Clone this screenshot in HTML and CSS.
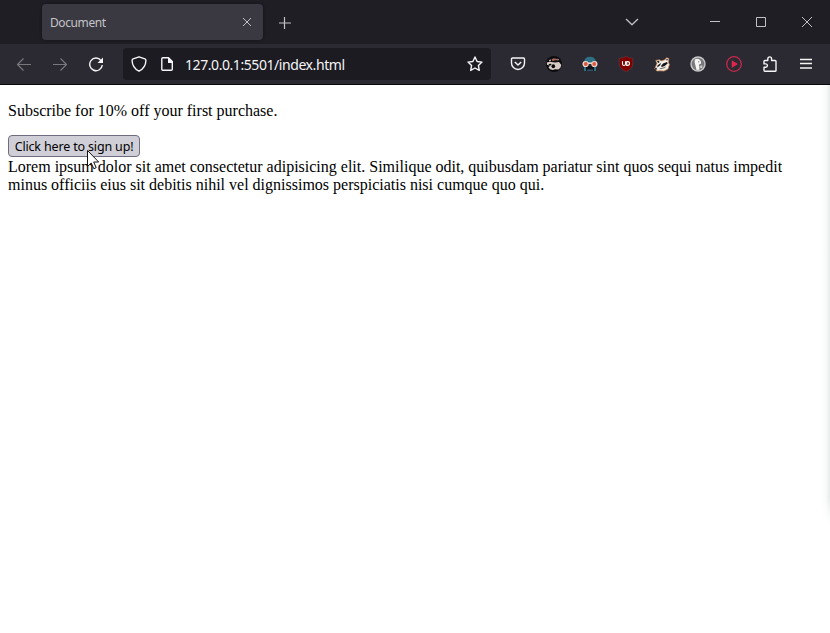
FILE: index.html
```html
<!DOCTYPE html>
<html lang="en">
<head>
<meta charset="utf-8">
<title>Document</title>
<link rel="stylesheet" href="styles.css">
</head>
<body>
<header class="tabs">
  <div class="tab"><span class="tab-title">Document</span>
    <svg class="tab-close" width="10" height="10" viewBox="0 0 10 10"><path d="M1 1l8 8M9 1L1 9"/></svg>
  </div>
  <svg class="new-tab" width="12" height="13" viewBox="0 0 12 13"><path d="M5.500 1v12M0 7h12"/></svg>
  <svg class="tab-list" width="14" height="8" viewBox="0 0 14 8"><path d="M1 1l6 5.7L13 1"/></svg>
  <div class="window-controls">
    <svg width="46" height="44" viewBox="0 0 46 44"><path d="M18 21.500h10"/></svg>
    <svg width="46" height="44" viewBox="0 0 46 44"><path d="M18.500 17.500h9v9h-9z"/></svg>
    <svg width="46" height="44" viewBox="0 0 46 44"><path d="M18 17l10 10M28 17L18 27"/></svg>
  </div>
</header>
<nav class="toolbar">
  <div class="navigation">
    <svg class="disabled" viewBox="0 0 16 16"><path d="M15 8.500H1.500M7.500 2.500l-6 6 6 6"/></svg>
    <svg class="disabled" viewBox="0 0 16 16"><path d="M1 8.500h13.500M8.500 2.500l6 6-6 6"/></svg>
    <svg viewBox="0 0 16 16"><path class="thick" d="M13 4.500A6.300 6.300 0 1 0 14.300 9"/><path class="solid" d="M15 1.500V7H9.500z"/></svg>
  </div>
  <div class="address">
    <svg viewBox="0 0 16 16"><path class="thick" d="M8 .8l5.900 2.100q1 .4 1 1.500C14.800 9 13 12.500 8 15.200 3 12.500 1.200 9 1.100 4.400q0-1.100 1-1.500z"/></svg>
    <svg class="page-icon" viewBox="0 0 16 16"><path class="thick" d="M9.500 1.800H3.800q-1 0-1 1v10.500q0 1 1 1h8.500q1 0 1-1V5.500z"/><path class="solid" d="M9 1l5 5v1H9z"/></svg>
    <span class="url">127.0.0.1:5501/index.html</span>
    <svg class="star" viewBox="0 0 16 16"><path class="thick" d="M8 1l2.100 4.500 4.900.6-3.600 3.400.9 4.900L8 12l-4.300 2.400.9-4.900L1 6.100l4.900-.6z"/></svg>
  </div>
  <div class="extensions">
    <svg viewBox="0 0 16 16"><path class="thick" d="M2.500 2h11q1 0 1 1v4a6.500 6.500 0 0 1-13 0V3q0-1 1-1zM4.800 6L8 9l3.200-3"/></svg>
    <svg viewBox="0 0 16 16"><circle cx="8" cy="8" r="8" fill="#0c0b0e"/><path fill="#d8cbc3" d="M.8 6.500L4 5.800l5 .7 4-.5 2.300 3-.8 2.500-2 2-3.500-.3-2 .8-3-.8-1.500-2 1.500-1.500-3-1z"/><path fill="#a9645b" d="M5.500 3.500l2-1.200 4 .8 1 1.400-3-.3-3 .8z"/><path fill="#d8cbc3" d="M3 4.300l1.500-1 .5 1.500-1.500.7zM11.500 2.500l1.500 1-1 .8z"/><ellipse cx="7.300" cy="10.300" rx="1.800" ry="2" fill="#080808"/><path fill="#0c0b0e" d="M3 8l2-.3.5 1L4 9.700 2.500 9z"/></svg>
    <svg viewBox="0 0 16 16"><path fill="#2e7185" d="M1.800 7.500V6Q3 .7 8 .7T14.200 6v1.500zM2 11h2v4H2zM12 11h2v4h-2z"/><path fill="#14131a" d="M4 10h8v4.500H4z"/><circle cx="3.600" cy="8" r="3.100" fill="#e9d7ce"/><circle cx="12.400" cy="8" r="3.100" fill="#e9d7ce"/><path fill="#e9d7ce" d="M6 6.500h4V8H6z"/><circle cx="3.800" cy="8" r="1.900" fill="#df563b"/><circle cx="12.200" cy="8" r="1.900" fill="#df563b"/><path fill="#285568" d="M5 13.500h6V15H5z"/></svg>
    <svg viewBox="0 0 16 16"><path fill="#800000" stroke="#68474c" stroke-width=".5" d="M8 .3q3 2 6.800 2V8q0 4.500-6.800 7.700Q1.200 12.500 1.200 8V2.300Q5 2.300 8 .3z"/><path class="badge-mark" d="M4.500 5.300V8q0 1.500 1.500 1.500T7.500 8V5.300M8.700 5.600h.8q2 0 2 1.900t-2 1.900h-.8z"/></svg>
    <svg viewBox="0 0 16 16"><path fill="#f3eee7" stroke="#ce8854" stroke-width=".7" d="M.7 13L3 7.500 1.800 4.500l3.500-.7L7 5l4-1.200 1.500-2 2.300.7-.4 4 1 2-1.400 4.500-4 2-4-.2L3 15z"/><path fill="#16151a" d="M3 5l2-.3.5 1.500-1.500.8zM3.500 9.500L7 6.700l-.8 2.500-3 2.300zM7 10l2-2.500 4-1.500.7 1.500-3 2.500-3 1zM12.500 3h1.300l-.5 1.800-1-.5zM.8 12.500l1.700-.8.6 1.500-1.700.8z"/><path fill="#777" d="M5 12.500l4-1 3-1-1 1.500-4 1.200z"/></svg>
    <svg viewBox="0 0 16 16"><circle cx="8" cy="8" r="7.700" fill="#c8c8c9"/><circle cx="8" cy="8" r="6.300" fill="#79797b"/><path fill="#f5f5f5" d="M4.800 3.500Q7 2.200 9.500 3.500q2 1.500 1.600 4L9 8.500l.5 5.300-3 .2L5.300 9 4.600 6z"/><circle cx="8.800" cy="5.800" r=".6" fill="#555"/><path fill="#c9c9c9" d="M9.800 10l2.500-.7v3l-2.500-.6z"/></svg>
    <svg viewBox="0 0 16 16"><circle class="play-ring" cx="8" cy="8" r="7.300"/><path fill="#df254c" d="M5.700 4.200L12 8l-6.300 3.900z"/></svg>
    <svg viewBox="0 0 16 16"><path class="thick" d="M2 14.300v-3h1.700a1.700 1.700 0 0 0 0-3.400H2V5.300q0-.8.800-.8h3V2.800a1.900 1.900 0 0 1 3.800 0v1.700h3.600q.8 0 .8.800v9.200q0 .8-.8.800H2.800q-.8 0-.8-1z"/></svg>
    <svg viewBox="0 0 16 16"><path class="thick" d="M2 3.500h12M2 7.500h12M2 12h12"/></svg>
  </div>
</nav>
<main class="page">
  <p>Subscribe for 10% off your first purchase.</p>
  <button class="signup">Click here to sign up!</button>
  <div class="copy">Lorem ipsum dolor sit amet consectetur adipisicing elit. Similique odit, quibusdam pariatur sint quos sequi natus impedit minus officiis eius sit debitis nihil vel dignissimos perspiciatis nisi cumque quo qui.</div>
  <svg class="cursor" width="13" height="20" viewBox="0 0 13 20"><path d="M.5.5v16l3.700-3.500 2.600 5.700 2.400-1-2.500-5.700h5z"/></svg>
  <div class="edge-shadow"></div>
</main>
</body>
</html>
```
FILE: styles.css
```css
* { box-sizing: border-box; }
body {
  margin: 0;
  height: 633px;
  overflow: hidden;
  display: flex;
  flex-direction: column;
  background: #fff;
  color: #000;
  font: 16px/18px "Liberation Serif", serif;
}
svg { display: block; flex: none; fill: none; stroke-linejoin: round; }
.tabs {
  height: 44px;
  flex: none;
  display: flex;
  align-items: center;
  padding-left: 42px;
  background: #1f1e25;
  stroke: #c2c1c5;
}
.tab {
  width: 221px;
  height: 36px;
  display: flex;
  align-items: center;
  justify-content: space-between;
  padding: 0 11px 0 8px;
  border-radius: 4px;
  background: #3a3942;
  box-shadow: 0 0 3px #131217;
  color: #c4c3c7;
  font: 12px/16px "Noto Sans", sans-serif;
}
.tab-title { padding-top: 2px; letter-spacing: -.4px; font-size: 12px; }
.new-tab { margin-left: 16px; stroke-width: 1.2; }
.tab-list { margin-left: 334px; stroke-width: 1.3; }
.window-controls { display: flex; margin-left: 53px; }
.toolbar {
  height: 41px;
  flex: none;
  display: flex;
  align-items: center;
  background: #2b2a33;
  border-bottom: 1px solid #08070b;
  stroke: #f5f5f7;
}
.toolbar svg { width: 16px; height: 16px; }
.navigation { display: flex; gap: 20px; padding-left: 16px; width: 123px; }
.disabled { stroke: #77767d; stroke-width: 1.2; }
.thick { stroke-width: 1.4; }
.solid { fill: #f5f5f7; stroke: none; }
.address {
  width: 368px;
  height: 32px;
  display: flex;
  align-items: center;
  padding: 0 8px;
  border-radius: 4px;
  background: #1c1b22;
}
.page-icon { margin-left: 12px; }
.url {
  margin-left: 10px;
  padding-top: 2px;
  color: #f4f4f6;
  font: 14px/20px "Noto Sans", sans-serif;
  letter-spacing: -.43px;
  white-space: nowrap;
}
.star { margin-left: auto; }
.extensions { display: flex; gap: 20px; margin-left: 19px; }
.extensions svg [fill]:not([stroke]) { stroke: none; }
.badge-mark { stroke: #fff; stroke-width: 1.1; }
.play-ring { stroke: #c9284b; stroke-width: 1.3; }
.page { flex: 1; position: relative; padding: 17px 8px; }
.page p { margin: 0 0 15px; }
.signup {
  display: block;
  width: 132px;
  height: 22px;
  padding: 2px 0 0 0;
  border: 1px solid #706c80;
  border-radius: 4px;
  background: #d0cfd7;
  color: #000;
  font: 12.5px/18px "Noto Sans", sans-serif;
  letter-spacing: -.16px;
  white-space: nowrap;
}
.copy { margin-top: 1px; }
.cursor { position: absolute; left: 87px; top: 65px; fill: #fff; stroke: #111; }
.edge-shadow {
  position: absolute;
  right: 0;
  top: 0;
  width: 9px;
  height: 439px;
  background: linear-gradient(to right, #fff0, #f7f8f8 60%, #e9ecec);
  mask-image: linear-gradient(#000 94%, transparent);
}
```
